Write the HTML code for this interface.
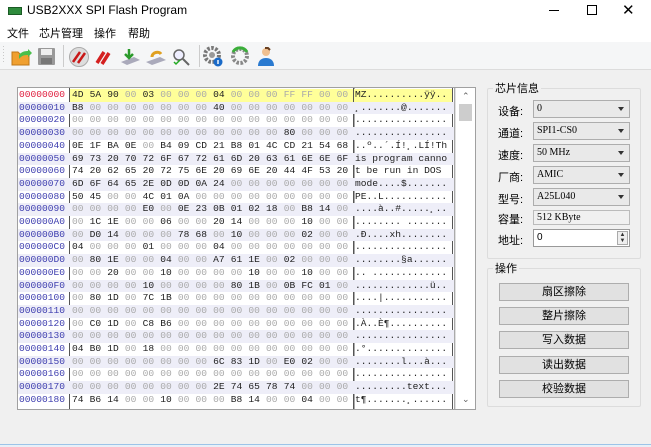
<!DOCTYPE html>
<html><head><meta charset="utf-8">
<style>
*{margin:0;padding:0;box-sizing:border-box}
body{width:651px;height:447px;overflow:hidden;background:#f0f0f0;font-family:"Liberation Sans","Noto Sans CJK SC",sans-serif;font-size:12px;color:#000;position:relative}
.abs{position:absolute}
#title{left:0;top:0;width:651px;height:22px;background:#fff}
#menu{left:0;top:22px;width:651px;height:20px;background:#fff}
#menu span{position:absolute;top:3px;font-size:11px}
#tb{left:0;top:42px;width:651px;height:28px;background:#f5f6f7;border-bottom:1px solid #dcdcdc}
#hex{left:17px;top:87px;width:459px;height:323px;background:#fff;border:1px solid #a0a0a0;font-family:"Liberation Mono",monospace;font-size:9.6px;overflow:hidden}
.r{position:absolute;left:0;width:436px;height:12.7px;line-height:12.7px;white-space:pre}
.r.o{background:#eeeef8}
.r.y .h,.r.y .t{background:#ffff99}
.a{position:absolute;left:1px;width:50px;color:#4040b0}
.h{position:absolute;left:52px;width:283px;height:100%;padding-left:2px}
.h b{display:inline-block;width:17.65px;font-weight:normal;color:#222}
.h i{display:inline-block;width:17.65px;font-style:normal;color:#aaa}
.t{position:absolute;left:336px;width:98px;height:100%;padding-left:1px;color:#222}
.sb{position:absolute;left:437px;top:0;width:20px;height:321px;background:#fff;border-left:1px solid #e0e0e0}
.gb{border:1px solid #dcdcdc;border-radius:2px}
.lbl{position:absolute;font-size:11px}
.cb{position:absolute;left:533px;width:97px;height:18px;border:1px solid #adadad;background:#e9e9e9;font-family:"Liberation Serif","Noto Serif CJK SC",serif;font-size:10px;line-height:16px;padding-left:3px}
.cb:after{content:"";position:absolute;right:5px;top:6px;border-left:3.5px solid transparent;border-right:3.5px solid transparent;border-top:4px solid #333}
.btn{position:absolute;left:499px;width:130px;height:18px;border:1px solid #adadad;background:#e1e1e1;text-align:center;font-size:11px;line-height:16px}
</style></head><body>
<div id="title" class="abs">
  <div class="abs" style="left:8px;top:7px;width:14px;height:8px;background:#2e8b3c;border:1px solid #1a5a24"></div>
  <div class="abs" style="left:27px;top:3px;font-size:12px;color:#000">USB2XXX SPI Flash Program</div>
  <div class="abs" style="left:549px;top:10px;width:10px;height:1px;background:#000"></div>
  <div class="abs" style="left:587px;top:5px;width:10px;height:10px;border:1px solid #000"></div>
  <div class="abs" style="left:622px;top:1px;font-size:15px;color:#000">✕</div>
</div>
<div id="menu" class="abs">
  <span style="left:7px">文件</span><span style="left:39px">芯片管理</span><span style="left:94px">操作</span><span style="left:128px">帮助</span>
</div>
<div id="tb" class="abs">
  <svg width="300" height="28" style="position:absolute;left:0;top:0">
    <g fill="#c8c8c8"><rect x="3" y="4" width="1" height="1"/><rect x="3" y="7" width="1" height="1"/><rect x="3" y="10" width="1" height="1"/><rect x="3" y="13" width="1" height="1"/><rect x="3" y="16" width="1" height="1"/><rect x="3" y="19" width="1" height="1"/></g>
    <path d="M12 10h6l2 2h9v11H12z" fill="#f0a030" stroke="#c07818"/>
    <path d="M19 13c3-4 7-4 9-4l0-2 4 4-4 4v-2c-3 0-6 0-9 4z" fill="#4bbf4b"/>
    <rect x="38" y="6" width="17" height="17" fill="#999" rx="1"/><rect x="41" y="7" width="11" height="6" fill="#eee"/><rect x="41" y="16" width="11" height="6" fill="#777"/>
    <rect x="63" y="3" width="1" height="22" fill="#ccc"/>
    <circle cx="79" cy="15" r="9.5" fill="#ddd" stroke="#aaa"/><path d="M73 20l7-10M78 21l7-10" stroke="#c81818" stroke-width="2.5"/>
    <path d="M97 21l7-11M102 22l7-11" stroke="#d42020" stroke-width="3.5"/>
    <path d="M121 20l6 3 13-5-6-3z" fill="#aab"/><path d="M129 7v8M125 12l4 4 4-4" stroke="#2a9a2a" stroke-width="2.5" fill="none"/>
    <path d="M146 20l6 3 14-5-6-3z" fill="#aab"/><path d="M152 15c0-5 7-6 9-3" stroke="#e0a020" stroke-width="3" fill="none"/>
    <circle cx="179" cy="13" r="5" fill="#eef" stroke="#666" stroke-width="1.5"/><path d="M183 17l6 6" stroke="#666" stroke-width="2"/><path d="M174 20l2 2 4-4" stroke="#2a2" stroke-width="1.5" fill="none"/>
    <rect x="199" y="3" width="1" height="22" fill="#ccc"/>
    <circle cx="212" cy="13" r="7" fill="none" stroke="#777" stroke-width="4" stroke-dasharray="2.5 1.5"/><circle cx="212" cy="13" r="3" fill="#999"/><circle cx="218" cy="20" r="4.5" fill="#1a6ac8"/><rect x="217.3" y="18" width="1.4" height="4" fill="#fff"/>
    <circle cx="240" cy="14" r="7" fill="none" stroke="#888" stroke-width="4" stroke-dasharray="2.5 1.5"/><path d="M233 10a8 8 0 0 1 14 0" stroke="#3aae3a" stroke-width="3" fill="none"/>
    <circle cx="266" cy="10" r="4" fill="#f0c090"/><path d="M265 6h3l2 2" stroke="#6a4020" stroke-width="2" fill="none"/><path d="M258 24c0-6 4-8 8-8s8 2 8 8z" fill="#2a7ad0"/>
  </svg>
</div>

<div id="hex" class="abs">
<div class="abs" style="left:51px;top:0;width:1px;height:321px;background:#555"></div>
<div class="abs" style="left:335px;top:0;width:2px;height:321px;border-left:1px solid #555;border-right:1px solid #aaa"></div>
<div class="abs" style="left:434px;top:0;width:3px;height:321px;border-left:1px solid #555;border-right:1px solid #aaa"></div>
<div class="r y" style="top:1px"><span class="a" style="color:#e02040">00000000</span><span class="h"><b>4D</b><b>5A</b><b>90</b><i>00</i><b>03</b><i>00</i><i>00</i><i>00</i><b>04</b><i>00</i><i>00</i><i>00</i><i>FF</i><i>FF</i><i>00</i><i>00</i></span><span class="t">MZ..........ÿÿ..</span></div>
<div class="r o" style="top:13.7px"><span class="a">00000010</span><span class="h"><b>B8</b><i>00</i><i>00</i><i>00</i><i>00</i><i>00</i><i>00</i><i>00</i><b>40</b><i>00</i><i>00</i><i>00</i><i>00</i><i>00</i><i>00</i><i>00</i></span><span class="t">¸.......@.......</span></div>
<div class="r" style="top:26.4px"><span class="a">00000020</span><span class="h"><i>00</i><i>00</i><i>00</i><i>00</i><i>00</i><i>00</i><i>00</i><i>00</i><i>00</i><i>00</i><i>00</i><i>00</i><i>00</i><i>00</i><i>00</i><i>00</i></span><span class="t">................</span></div>
<div class="r o" style="top:39.1px"><span class="a">00000030</span><span class="h"><i>00</i><i>00</i><i>00</i><i>00</i><i>00</i><i>00</i><i>00</i><i>00</i><i>00</i><i>00</i><i>00</i><i>00</i><b>80</b><i>00</i><i>00</i><i>00</i></span><span class="t">................</span></div>
<div class="r" style="top:51.8px"><span class="a">00000040</span><span class="h"><b>0E</b><b>1F</b><b>BA</b><b>0E</b><i>00</i><b>B4</b><b>09</b><b>CD</b><b>21</b><b>B8</b><b>01</b><b>4C</b><b>CD</b><b>21</b><b>54</b><b>68</b></span><span class="t">..º..´.Í!¸.LÍ!Th</span></div>
<div class="r o" style="top:64.5px"><span class="a">00000050</span><span class="h"><b>69</b><b>73</b><b>20</b><b>70</b><b>72</b><b>6F</b><b>67</b><b>72</b><b>61</b><b>6D</b><b>20</b><b>63</b><b>61</b><b>6E</b><b>6E</b><b>6F</b></span><span class="t">is program canno</span></div>
<div class="r" style="top:77.2px"><span class="a">00000060</span><span class="h"><b>74</b><b>20</b><b>62</b><b>65</b><b>20</b><b>72</b><b>75</b><b>6E</b><b>20</b><b>69</b><b>6E</b><b>20</b><b>44</b><b>4F</b><b>53</b><b>20</b></span><span class="t">t be run in DOS </span></div>
<div class="r o" style="top:89.9px"><span class="a">00000070</span><span class="h"><b>6D</b><b>6F</b><b>64</b><b>65</b><b>2E</b><b>0D</b><b>0D</b><b>0A</b><b>24</b><i>00</i><i>00</i><i>00</i><i>00</i><i>00</i><i>00</i><i>00</i></span><span class="t">mode....$.......</span></div>
<div class="r" style="top:102.6px"><span class="a">00000080</span><span class="h"><b>50</b><b>45</b><i>00</i><i>00</i><b>4C</b><b>01</b><b>0A</b><i>00</i><i>00</i><i>00</i><i>00</i><i>00</i><i>00</i><i>00</i><i>00</i><i>00</i></span><span class="t">PE..L...........</span></div>
<div class="r o" style="top:115.3px"><span class="a">00000090</span><span class="h"><i>00</i><i>00</i><i>00</i><i>00</i><b>E0</b><i>00</i><b>0E</b><b>23</b><b>0B</b><b>01</b><b>02</b><b>18</b><i>00</i><b>B8</b><b>14</b><i>00</i></span><span class="t">....à..#.....¸..</span></div>
<div class="r" style="top:128px"><span class="a">000000A0</span><span class="h"><i>00</i><b>1C</b><b>1E</b><i>00</i><i>00</i><b>06</b><i>00</i><i>00</i><b>20</b><b>14</b><i>00</i><i>00</i><i>00</i><b>10</b><i>00</i><i>00</i></span><span class="t">........ .......</span></div>
<div class="r o" style="top:140.7px"><span class="a">000000B0</span><span class="h"><i>00</i><b>D0</b><b>14</b><i>00</i><i>00</i><i>00</i><b>78</b><b>68</b><i>00</i><b>10</b><i>00</i><i>00</i><i>00</i><b>02</b><i>00</i><i>00</i></span><span class="t">.Ð....xh........</span></div>
<div class="r" style="top:153.4px"><span class="a">000000C0</span><span class="h"><b>04</b><i>00</i><i>00</i><i>00</i><b>01</b><i>00</i><i>00</i><i>00</i><b>04</b><i>00</i><i>00</i><i>00</i><i>00</i><i>00</i><i>00</i><i>00</i></span><span class="t">................</span></div>
<div class="r o" style="top:166.1px"><span class="a">000000D0</span><span class="h"><i>00</i><b>80</b><b>1E</b><i>00</i><i>00</i><b>04</b><i>00</i><i>00</i><b>A7</b><b>61</b><b>1E</b><i>00</i><b>02</b><i>00</i><i>00</i><i>00</i></span><span class="t">........§a......</span></div>
<div class="r" style="top:178.8px"><span class="a">000000E0</span><span class="h"><i>00</i><i>00</i><b>20</b><i>00</i><i>00</i><b>10</b><i>00</i><i>00</i><i>00</i><i>00</i><b>10</b><i>00</i><i>00</i><b>10</b><i>00</i><i>00</i></span><span class="t">.. .............</span></div>
<div class="r o" style="top:191.5px"><span class="a">000000F0</span><span class="h"><i>00</i><i>00</i><i>00</i><i>00</i><b>10</b><i>00</i><i>00</i><i>00</i><i>00</i><b>80</b><b>1B</b><i>00</i><b>0B</b><b>FC</b><b>01</b><i>00</i></span><span class="t">.............ü..</span></div>
<div class="r" style="top:204.2px"><span class="a">00000100</span><span class="h"><i>00</i><b>80</b><b>1D</b><i>00</i><b>7C</b><b>1B</b><i>00</i><i>00</i><i>00</i><i>00</i><i>00</i><i>00</i><i>00</i><i>00</i><i>00</i><i>00</i></span><span class="t">....|...........</span></div>
<div class="r o" style="top:216.9px"><span class="a">00000110</span><span class="h"><i>00</i><i>00</i><i>00</i><i>00</i><i>00</i><i>00</i><i>00</i><i>00</i><i>00</i><i>00</i><i>00</i><i>00</i><i>00</i><i>00</i><i>00</i><i>00</i></span><span class="t">................</span></div>
<div class="r" style="top:229.6px"><span class="a">00000120</span><span class="h"><i>00</i><b>C0</b><b>1D</b><i>00</i><b>C8</b><b>B6</b><i>00</i><i>00</i><i>00</i><i>00</i><i>00</i><i>00</i><i>00</i><i>00</i><i>00</i><i>00</i></span><span class="t">.À..È¶..........</span></div>
<div class="r o" style="top:242.3px"><span class="a">00000130</span><span class="h"><i>00</i><i>00</i><i>00</i><i>00</i><i>00</i><i>00</i><i>00</i><i>00</i><i>00</i><i>00</i><i>00</i><i>00</i><i>00</i><i>00</i><i>00</i><i>00</i></span><span class="t">................</span></div>
<div class="r" style="top:255px"><span class="a">00000140</span><span class="h"><b>04</b><b>B0</b><b>1D</b><i>00</i><b>18</b><i>00</i><i>00</i><i>00</i><i>00</i><i>00</i><i>00</i><i>00</i><i>00</i><i>00</i><i>00</i><i>00</i></span><span class="t">.°..............</span></div>
<div class="r o" style="top:267.7px"><span class="a">00000150</span><span class="h"><i>00</i><i>00</i><i>00</i><i>00</i><i>00</i><i>00</i><i>00</i><i>00</i><b>6C</b><b>83</b><b>1D</b><i>00</i><b>E0</b><b>02</b><i>00</i><i>00</i></span><span class="t">........l...à...</span></div>
<div class="r" style="top:280.4px"><span class="a">00000160</span><span class="h"><i>00</i><i>00</i><i>00</i><i>00</i><i>00</i><i>00</i><i>00</i><i>00</i><i>00</i><i>00</i><i>00</i><i>00</i><i>00</i><i>00</i><i>00</i><i>00</i></span><span class="t">................</span></div>
<div class="r o" style="top:293.1px"><span class="a">00000170</span><span class="h"><i>00</i><i>00</i><i>00</i><i>00</i><i>00</i><i>00</i><i>00</i><i>00</i><b>2E</b><b>74</b><b>65</b><b>78</b><b>74</b><i>00</i><i>00</i><i>00</i></span><span class="t">.........text...</span></div>
<div class="r" style="top:305.8px"><span class="a">00000180</span><span class="h"><b>74</b><b>B6</b><b>14</b><i>00</i><i>00</i><b>10</b><i>00</i><i>00</i><i>00</i><b>B8</b><b>14</b><i>00</i><i>00</i><b>04</b><i>00</i><i>00</i></span><span class="t">t¶.......¸......</span></div>
<div class="sb">
  <div class="abs" style="left:6px;top:4px;font-size:9px;color:#606060;font-family:'DejaVu Sans',sans-serif">&#8963;</div>
  <div class="abs" style="left:3px;top:16px;width:13px;height:17px;background:#cdcdcd"></div>
  <div class="abs" style="left:6px;top:307px;font-size:9px;color:#606060;font-family:'DejaVu Sans',sans-serif">&#8964;</div>
</div>
</div>

<div class="abs gb" style="left:487px;top:88px;width:154px;height:171px"></div>
<div class="abs" style="left:493px;top:80px;background:#f0f0f0;padding:0 2px;font-size:11px">芯片信息</div>
<span class="lbl" style="left:498px;top:103px">设备:</span><div class="cb" style="top:100px">0</div>
<span class="lbl" style="left:498px;top:125px">通道:</span><div class="cb" style="top:122px">SPI1-CS0</div>
<span class="lbl" style="left:498px;top:147px">速度:</span><div class="cb" style="top:144px">50 MHz</div>
<span class="lbl" style="left:498px;top:169px">厂商:</span><div class="cb" style="top:166px">AMIC</div>
<span class="lbl" style="left:498px;top:191px">型号:</span><div class="cb" style="top:188px">A25L040</div>
<span class="lbl" style="left:498px;top:211px">容量:</span><div class="abs" style="left:533px;top:210px;width:97px;height:15px;border:1px solid #bbb;background:#f0f0f0;font-family:'Liberation Serif',serif;font-size:10px;line-height:13px;padding-left:3px">512 KByte</div>
<span class="lbl" style="left:498px;top:232px">地址:</span><div class="abs" style="left:533px;top:229px;width:97px;height:18px;border:1px solid #999;background:#fff;font-size:10px;line-height:16px;padding-left:3px">0<div class="abs" style="right:1px;top:1px;width:11px;height:14px;border:1px solid #aaa;background:#eee;font-size:6px;line-height:6px;text-align:center;color:#333">▲<br>▼</div></div>

<div class="abs gb" style="left:487px;top:268px;width:154px;height:139px"></div>
<div class="abs" style="left:493px;top:260px;background:#f0f0f0;padding:0 2px;font-size:11px">操作</div>
<div class="btn" style="top:283px">扇区擦除</div>
<div class="btn" style="top:307px">整片擦除</div>
<div class="btn" style="top:331px">写入数据</div>
<div class="btn" style="top:356px">读出数据</div>
<div class="btn" style="top:380px">校验数据</div>

<div class="abs" style="left:0;top:444px;width:651px;height:3px;background:#e8f0f8;border-top:1px solid #9cc4e8"></div>
</body></html>
